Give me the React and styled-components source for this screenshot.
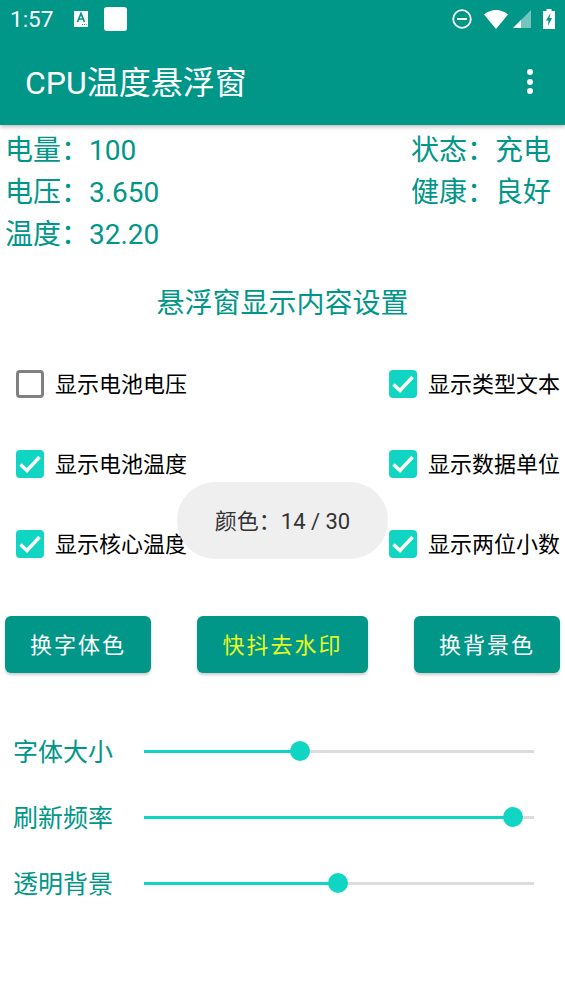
import React from 'react';
import styled, { createGlobalStyle } from 'styled-components';

const FONT = `"Roboto", "Noto Sans CJK SC", sans-serif`;
const GREEN = '#009688';
const TEAL = '#10d5c3';

function Check({ on }) {
  return (
    <Box $on={on}>
      {on && (
        <svg width="24" height="20" viewBox="0 0 24 20">
          <path d="M2.5 10.5 L9 16.5 L21.5 3" fill="none" stroke="#fff" strokeWidth="3.4" />
        </svg>
      )}
    </Box>
  );
}

function Option({ on, text }) {
  return (
    <OptionRow>
      <Check on={on} />
      <OptionText>{text}</OptionText>
    </OptionRow>
  );
}

function Slider({ label, percent }) {
  return (
    <SliderRow>
      <SliderLabel>{label}</SliderLabel>
      <Track>
        <Fill style={{ width: `${percent}%` }} />
        <Thumb style={{ left: `${percent}%` }} />
      </Track>
    </SliderRow>
  );
}

export default function App() {
  return (
    <>
      <Global />
      <Page>
        <Header>
          <StatusBar>
            <StatusLeft>
              <Time>1:57</Time>
              <svg width="16" height="16" viewBox="0 0 16 16">
                <rect x="1" y="0" width="14" height="16" fill="#fff" />
                <path d="M4.5 11 L8 2.5 L11.5 11 M6 8 H10" fill="none" stroke={GREEN} strokeWidth="1.7" />
                <path d="M9 13.5 H13.5" stroke={GREEN} strokeWidth="1" strokeDasharray="1 1" />
              </svg>
              <WhiteSquare />
            </StatusLeft>
            <StatusRight>
              <svg width="20" height="20" viewBox="0 0 20 20">
                <circle cx="10" cy="10" r="8.8" fill="none" stroke="#fff" strokeWidth="1.8" />
                <rect x="5" y="9" width="10" height="2" fill="#fff" />
              </svg>
              <WifiIcon width="24" height="19" viewBox="0 0 24 19">
                <path d="M0 4.5 C7 -1.5 17 -1.5 24 4.5 L12 19 Z" fill="#fff" />
              </WifiIcon>
              <svg width="18" height="18" viewBox="0 0 18 18">
                <path d="M18 0 V18 H0 Z" fill="#fff" opacity="0.45" />
                <path d="M8 10 V18 H0 Z" fill="#fff" />
              </svg>
              <svg width="12" height="20" viewBox="0 0 12 20">
                <path d="M3.5 0 H8.5 V2 H12 V20 H0 V2 H3.5 Z" fill="#fff" />
                <path d="M7.5 4 L3 11.5 H5.5 L5 17 L9 9 H6.5 Z" fill={GREEN} />
              </svg>
            </StatusRight>
          </StatusBar>
          <Toolbar>
            <AppTitle>CPU温度悬浮窗</AppTitle>
            <MoreDots>
              <i />
              <i />
              <i />
            </MoreDots>
          </Toolbar>
        </Header>

        <Info>
          <InfoColumn>
            <InfoLine>电量：100</InfoLine>
            <InfoLine>电压：3.650</InfoLine>
            <InfoLine>温度：32.20</InfoLine>
          </InfoColumn>
          <InfoColumn>
            <InfoLine>状态：充电</InfoLine>
            <InfoLine>健康：良好</InfoLine>
          </InfoColumn>
        </Info>

        <SectionTitle>悬浮窗显示内容设置</SectionTitle>

        <Options>
          <Option on={false} text="显示电池电压" />
          <Option on text="显示类型文本" />
          <Option on text="显示电池温度" />
          <Option on text="显示数据单位" />
          <Option on text="显示核心温度" />
          <Option on text="显示两位小数" />
          <Toast>颜色：14 / 30</Toast>
        </Options>

        <Buttons>
          <ActionButton $w={146}>换字体色</ActionButton>
          <ActionButton $w={171} $yellow>快抖去水印</ActionButton>
          <ActionButton $w={146}>换背景色</ActionButton>
        </Buttons>

        <Sliders>
          <Slider label="字体大小" percent={40} />
          <Slider label="刷新频率" percent={94.6} />
          <Slider label="透明背景" percent={49.7} />
        </Sliders>
      </Page>
    </>
  );
}

const Global = createGlobalStyle`
  html, body {
    margin : 0;
    padding : 0;
    background-color : #fff;
  }
  body {
    font-family : ${FONT};
  }
`;
const Page = styled.div`
  width : 565px;
  height : 1004px;
  overflow : hidden;
  background-color : #fff;
`;
const Header = styled.div`
  background-color : ${GREEN};
  box-shadow : 0 2px 4px rgba(0, 0, 0, 0.25);
`;
const StatusBar = styled.div`
  height : 38px;
  display : flex;
  justify-content : space-between;
  align-items : center;
  padding : 0 10px;
`;
const StatusLeft = styled.div`
  display : flex;
  align-items : center;
  gap : 20px;
`;
const StatusRight = styled.div`
  display : flex;
  align-items : center;
  gap : 12px;
`;
const WifiIcon = styled.svg`
  margin-right : -7px;
`;
const Time = styled.div`
  font-size : 22.5px;
  color : #fff;
`;
const WhiteSquare = styled.div`
  width : 23px;
  height : 24px;
  margin-left : -5px;
  border-radius : 3px;
  background-color : #fff;
`;
const Toolbar = styled.div`
  height : 87px;
  display : flex;
  justify-content : space-between;
  align-items : center;
  padding : 0 32px 0 25px;
  box-sizing : border-box;
`;
const AppTitle = styled.div`
  font-size : 32px;
  color : #fff;
  margin-bottom : 4px;
`;
const MoreDots = styled.div`
  display : flex;
  flex-direction : column;
  gap : 3.4px;
  i {
    width : 6px;
    height : 6px;
    border-radius : 50%;
    background-color : #fff;
  }
`;
const Info = styled.div`
  display : flex;
  justify-content : space-between;
  padding : 5px 14px 0 5px;
`;
const InfoColumn = styled.div`
  display : flex;
  flex-direction : column;
`;
const InfoLine = styled.div`
  height : 42px;
  line-height : 42px;
  font-size : 28px;
  color : ${GREEN};
`;
const SectionTitle = styled.div`
  margin-top : 27px;
  height : 42px;
  line-height : 42px;
  text-align : center;
  font-size : 28px;
  color : ${GREEN};
`;
const Options = styled.div`
  position : relative;
  margin-top : 19px;
  padding : 0 5px 0 16px;
  display : grid;
  grid-template-columns : 1fr auto;
  grid-auto-rows : 80px;
`;
const OptionRow = styled.div`
  display : flex;
  align-items : center;
  gap : 11px;
`;
const Box = styled.div`
  width : 28px;
  height : 28px;
  box-sizing : border-box;
  border-radius : 4px;
  display : flex;
  align-items : center;
  justify-content : center;
  background-color : ${(p) => (p.$on ? TEAL : '#fff')};
  border : ${(p) => (p.$on ? 'none' : '3px solid #808080')};
`;
const OptionText = styled.div`
  font-size : 22px;
  color : #000;
  margin-bottom : 5px;
`;
const Toast = styled.div`
  position : absolute;
  left : 177px;
  top : 138px;
  width : 211px;
  height : 77px;
  box-sizing : border-box;
  padding-bottom : 4px;
  border-radius : 38px;
  background-color : #efefef;
  display : flex;
  align-items : center;
  justify-content : center;
  font-size : 22px;
  color : #333;
`;
const Buttons = styled.div`
  margin-top : 32px;
  padding : 0 5px;
  display : flex;
  justify-content : space-between;
`;
const ActionButton = styled.div`
  width : ${(p) => p.$w}px;
  height : 57px;
  box-sizing : border-box;
  padding-bottom : 4px;
  border-radius : 6px;
  background-color : ${GREEN};
  box-shadow : 0 2px 3px rgba(0, 0, 0, 0.2);
  display : flex;
  align-items : center;
  justify-content : center;
  font-size : 22px;
  letter-spacing : 2px;
  color : ${(p) => (p.$yellow ? '#e8fb1e' : '#fff')};
`;
const Sliders = styled.div`
  margin-top : 45px;
  padding : 0 31px 0 13px;
  display : flex;
  flex-direction : column;
`;
const SliderRow = styled.div`
  height : 66px;
  display : flex;
  align-items : center;
`;
const SliderLabel = styled.div`
  width : 131px;
  font-size : 25px;
  color : ${GREEN};
  margin-bottom : 3px;
`;
const Track = styled.div`
  position : relative;
  flex : 1;
  height : 3px;
  background-color : #dcdcdc;
`;
const Fill = styled.div`
  height : 100%;
  background-color : ${TEAL};
`;
const Thumb = styled.div`
  position : absolute;
  top : 50%;
  width : 20px;
  height : 20px;
  border-radius : 50%;
  background-color : ${TEAL};
  transform : translate(-50%, -50%);
`;
